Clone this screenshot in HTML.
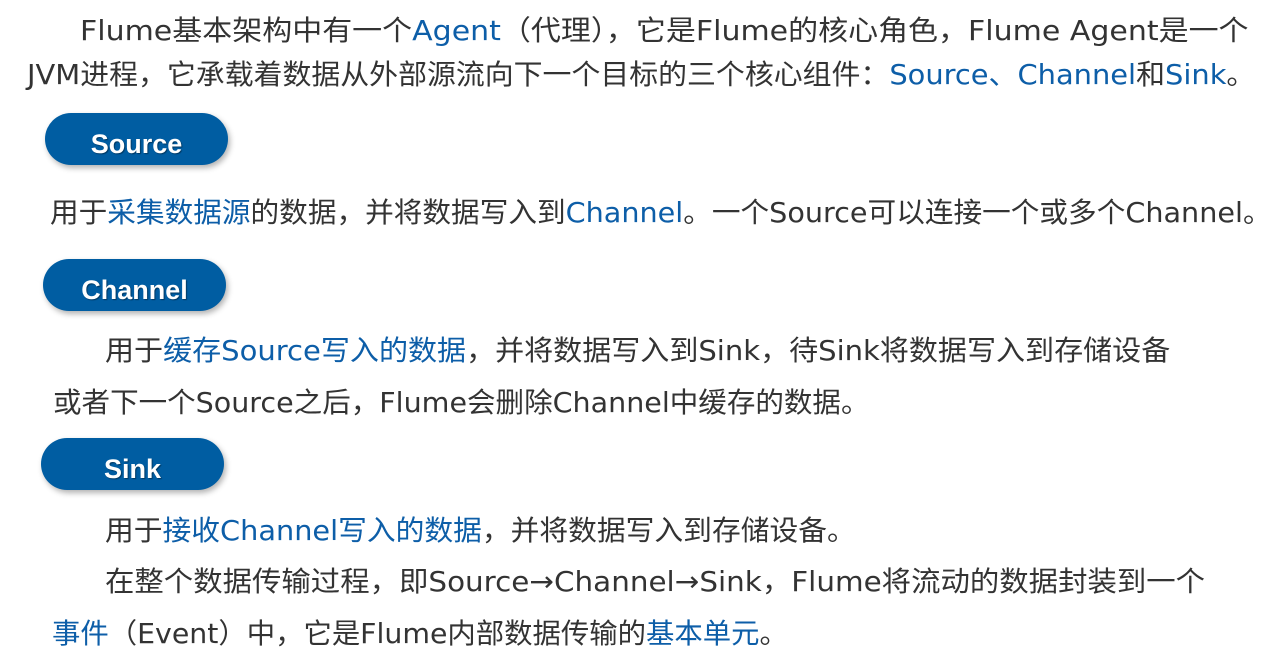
<!DOCTYPE html>
<html><head><meta charset="utf-8"><style>
body{margin:0;width:1270px;height:668px;background:#fff;position:relative;overflow:hidden;font-family:"DejaVu Sans","Noto Sans CJK SC",sans-serif;}
.l{position:absolute;white-space:nowrap;font-size:28px;line-height:36px;color:#333;transform-origin:0 50%;}
.b{color:#0d5ea8;}
.p{position:absolute;width:183px;height:52px;border-radius:26px;background:#005da2;color:#fff;font-weight:bold;font-family:"Liberation Sans",sans-serif;font-size:27px;line-height:62px;text-align:center;box-shadow:2px 3px 6px rgba(0,0,0,.3);text-shadow:1px 1px 1px rgba(0,0,0,.4);}
</style></head><body>
<div class="l" style="left:80px;top:13px;transform:scaleX(1.071)">Flume基本架构中有一个<span class="b">Agent</span>（代理），它是Flume的核心角色，Flume Agent是一个</div>
<div class="l" style="left:27px;top:57px;transform:scaleX(1.032)">JVM进程，它承载着数据从外部源流向下一个目标的三个核心组件：<span class="b">Source、Channel</span>和<span class="b">Sink</span>。</div>
<div class="p" style="left:45px;top:113px">Source</div>
<div class="l" style="left:50px;top:195px;transform:scaleX(1.023)">用于<span class="b">采集数据源</span>的数据，并将数据写入到<span class="b">Channel</span>。一个Source可以连接一个或多个Channel。</div>
<div class="p" style="left:43px;top:259px">Channel</div>
<div class="l" style="left:105px;top:333px;transform:scaleX(1.037)">用于<span class="b">缓存Source写入的数据</span>，并将数据写入到Sink，待Sink将数据写入到存储设备</div>
<div class="l" style="left:53px;top:385px;transform:scaleX(1.019)">或者下一个Source之后，Flume会删除Channel中缓存的数据。</div>
<div class="p" style="left:41px;top:438px">Sink</div>
<div class="l" style="left:105px;top:513px;transform:scaleX(1.027)">用于<span class="b">接收Channel写入的数据</span>，并将数据写入到存储设备。</div>
<div class="l" style="left:105px;top:564px;transform:scaleX(1.05)">在整个数据传输过程，即Source→Channel→Sink，Flume将流动的数据封装到一个</div>
<div class="l" style="left:52px;top:616px;transform:scaleX(1.013)"><span class="b">事件</span>（Event）中，它是Flume内部数据传输的<span class="b">基本单元</span>。</div>
</body></html>
